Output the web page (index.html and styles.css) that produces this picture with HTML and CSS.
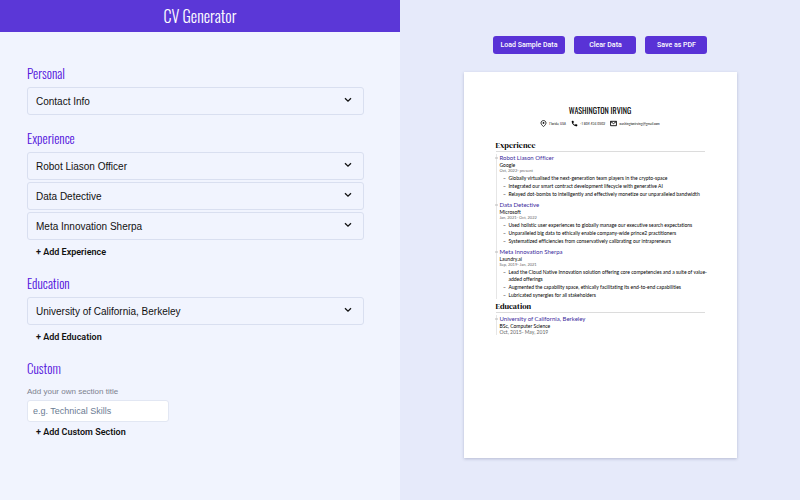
FILE: index.html
```html
<!DOCTYPE html>
<html lang="en">
<head>
<meta charset="utf-8">
<meta name="viewport" content="width=device-width, initial-scale=1">
<title>CV Generator</title>
<link rel="stylesheet" href="styles.css">
</head>
<body>
<svg class="symbols" aria-hidden="true">
  <symbol id="chevron" viewBox="0 0 8 8"><path d="M1 2.200 4 5.200 7 2.200" fill="none" stroke="currentColor" stroke-width="1.300"/></symbol>
  <symbol id="pin" viewBox="0 0 24 24"><path d="M12 2C7 2 3.500 5.500 3.500 10c0 4 3 8 8.500 12.500 5.500-4.500 8.500-8.500 8.500-12.500C20.500 5.500 17 2 12 2z" fill="none" stroke="currentColor" stroke-width="2.800"/><circle cx="12" cy="10" r="3"/></symbol>
  <symbol id="phone" viewBox="0 0 24 24"><path d="M6.620 10.790c1.440 2.830 3.760 5.140 6.590 6.590l2.200-2.200c.270-.270.670-.360 1.020-.240 1.120.370 2.330.570 3.570.570.550 0 1 .450 1 1V20c0 .550-.450 1-1 1C10.610 21 3 13.390 3 4c0-.550.450-1 1-1h3.500c.550 0 1 .450 1 1 0 1.250.200 2.450.570 3.570.110.350.030.740-.250 1.020z" stroke="currentColor"/></symbol>
  <symbol id="mail" viewBox="0 0 24 24"><path d="M2 4.500h20v15H2zM2 5l10 7.500L22 5" fill="none" stroke="currentColor" stroke-width="3"/></symbol>
</svg>
<div class="app">
  <div class="editor">
    <header class="topbar"><h1>CV Generator</h1></header>
    <main class="form">
      <section>
        <h2>Personal</h2>
        <div class="entries">
          <button type="button" class="entry">Contact Info<svg><use href="#chevron"/></svg></button>
        </div>
      </section>
      <section>
        <h2>Experience</h2>
        <div class="entries">
          <button type="button" class="entry">Robot Liason Officer<svg><use href="#chevron"/></svg></button>
          <button type="button" class="entry">Data Detective<svg><use href="#chevron"/></svg></button>
          <button type="button" class="entry">Meta Innovation Sherpa<svg><use href="#chevron"/></svg></button>
        </div>
        <button type="button" class="add">+ Add Experience</button>
      </section>
      <section>
        <h2>Education</h2>
        <div class="entries">
          <button type="button" class="entry">University of California, Berkeley<svg><use href="#chevron"/></svg></button>
        </div>
        <button type="button" class="add">+ Add Education</button>
      </section>
      <section>
        <h2>Custom</h2>
        <label for="section-title">Add your own section title</label>
        <input id="section-title" type="text" placeholder="e.g. Technical Skills">
        <button type="button" class="add">+ Add Custom Section</button>
      </section>
    </main>
  </div>
  <div class="preview">
    <div class="actions">
      <button type="button">Load Sample Data</button>
      <button type="button">Clear Data</button>
      <button type="button">Save as PDF</button>
    </div>
    <article class="paper">
      <h2 class="name">WASHINGTON IRVING</h2>
      <div class="contacts">
        <span><svg><use href="#pin"/></svg>Florida, USA</span>
        <span><svg><use href="#phone"/></svg>+1 804 456 0902</span>
        <span><svg><use href="#mail"/></svg>washingtonirving@gmail.com</span>
      </div>
      <section class="block">
        <h3>Experience</h3>
        <div class="timeline">
          <div class="item">
            <h4>Robot Liason Officer</h4>
            <p class="org">Google</p>
            <p class="date">Oct, 2022- present</p>
            <ul>
              <li>Globally virtualised the next-generation team players in the crypto-space</li>
              <li>Integrated our smart contract development lifecycle with generative AI</li>
              <li>Relayed dot-bombs to intelligently and effectively monetize our unparalleled bandwidth</li>
            </ul>
          </div>
          <div class="item">
            <h4>Data Detective</h4>
            <p class="org">Microsoft</p>
            <p class="date">Jan, 2021- Oct, 2022</p>
            <ul>
              <li>Used holistic user experiences to globally manage our executive search expectations</li>
              <li>Unparalleled big data to ethically enable company-wide prince2 practitioners</li>
              <li>Systematized efficiencies from conservatively calibrating our intrapreneurs</li>
            </ul>
          </div>
          <div class="item">
            <h4>Meta Innovation Sherpa</h4>
            <p class="org">Laundry.ai</p>
            <p class="date">Sep, 2019- Jan, 2021</p>
            <ul>
              <li>Lead the Cloud Native Innovation solution offering core competencies and a suite of value-added offerings</li>
              <li>Augmented the capability space, ethically facilitating its end-to-end capabilities</li>
              <li>Lubricated synergies for all stakeholders</li>
            </ul>
          </div>
        </div>
      </section>
      <section class="block">
        <h3>Education</h3>
        <div class="timeline">
          <div class="item school">
            <h4>University of California, Berkeley</h4>
            <p class="org">BSc, Computer Science</p>
            <p class="date">Oct, 2015- May, 2019</p>
          </div>
        </div>
      </section>
    </article>
  </div>
</div>
</body>
</html>
```
FILE: styles.css
```css
* { box-sizing: border-box; }
body, h1, h2, h3, h4, p, ul { margin: 0; padding: 0; }
body { font-family: "Liberation Sans", Arial, sans-serif; color: #111; }
button, input { font: inherit; color: inherit; margin: 0; }
button { cursor: pointer; }
.symbols { display: none; }

.app { display: grid; grid-template-columns: 1fr 1fr; min-height: 100vh; }

.editor { background: #f1f4fe; }
.topbar { background: #5b37d7; color: #fff; text-align: center; }
h1, h2 { font-family: Oswald, "Liberation Sans", sans-serif; font-weight: 300; }
.topbar h1 { font-size: 16px; line-height: 32px; }

.form { display: flex; flex-direction: column; gap: 14px; padding: 32px 36px 32px 27px; }
.form section { display: flex; flex-direction: column; align-items: flex-start; }
.form h2 { font-size: 13px; line-height: 18px; margin-bottom: 5px; color: #5212dc; }
.entries { display: flex; flex-direction: column; gap: 2px; width: 100%; }
.entry {
  display: flex; align-items: center; justify-content: space-between;
  height: 28px; padding: 0 11px 0 8px; text-align: left; font-size: 10px;
  background: none; border: 1px solid #d9dff0; border-radius: 3px;
}
.entry svg { width: 8px; height: 8px; margin-bottom: 2px; }
.add {
  margin-top: 4px; padding: 0 9px; border: 0; background: none;
  font: 600 9px/16px Roboto, sans-serif;
}
label { margin-top: 4px; font-size: 8px; line-height: 12px; color: #7d828f; }
#section-title {
  width: 142px; height: 22px; margin-top: 2px; padding: 0 5px;
  font-size: 9px; background: #fff; border: 1px solid #e2e7f3; border-radius: 3px;
}
#section-title::placeholder { color: #6b7c93; opacity: 1; }
#section-title + .add { margin-top: 2px; }

.preview {
  display: flex; flex-direction: column; align-items: center; gap: 18px;
  padding: 36px 20px; background: #e6eafa;
}
.actions { display: flex; gap: 9px; }
.actions button {
  min-width: 62px; height: 18px; padding: 0 8px; border: 0; border-radius: 3px;
  background: #5932d6; color: #fff; font: 500 7px Roboto, sans-serif;
}
.paper {
  width: 100%; max-width: 273px; aspect-ratio: 210 / 297; padding: 32px;
  background: #fff; box-shadow: 0 1px 3px #b5bbd2; color: #000;
  font-family: Lato, sans-serif; font-size: 5px; line-height: 7px;
  font-variant-ligatures: none;
}
.name { font-size: 8px; font-weight: 400; line-height: 12px; text-align: center; }
.contacts {
  display: flex; justify-content: center; gap: 5px; margin: 3px 0 14px;
  font-family: Oswald, sans-serif; font-weight: 300; font-size: 4px; line-height: 8px;
}
.contacts span { display: flex; align-items: center; gap: 2px; }
.contacts svg { width: 7px; height: 7px; }
.block + .block { margin-top: 3px; }
.block h3 {
  margin-bottom: 2px; border-bottom: 1px solid #dcdcdc;
  font: 400 8px/10px "DM Serif Display", "Liberation Serif", serif;
}
.timeline { display: flex; flex-direction: column; gap: 3px; border-left: 1px solid #e6e6e6; padding-left: 3px; }
.item { position: relative; }
.item::before {
  content: ""; position: absolute; left: -5px; top: 3px;
  width: 3px; height: 2px; border-radius: 1px; background: #d0d0d0;
}
.item h4 { font-size: 6px; line-height: 8px; font-weight: 400; color: #3a2a9c; }
.item p { line-height: 6px; }
.date { color: #666; }
.item:not(.school) .date { font-size: 4px; }
.item ul { display: flex; flex-direction: column; gap: 1px; margin: 1px -4px 0 0; padding-left: 9px; list-style: "–  "; }
```
